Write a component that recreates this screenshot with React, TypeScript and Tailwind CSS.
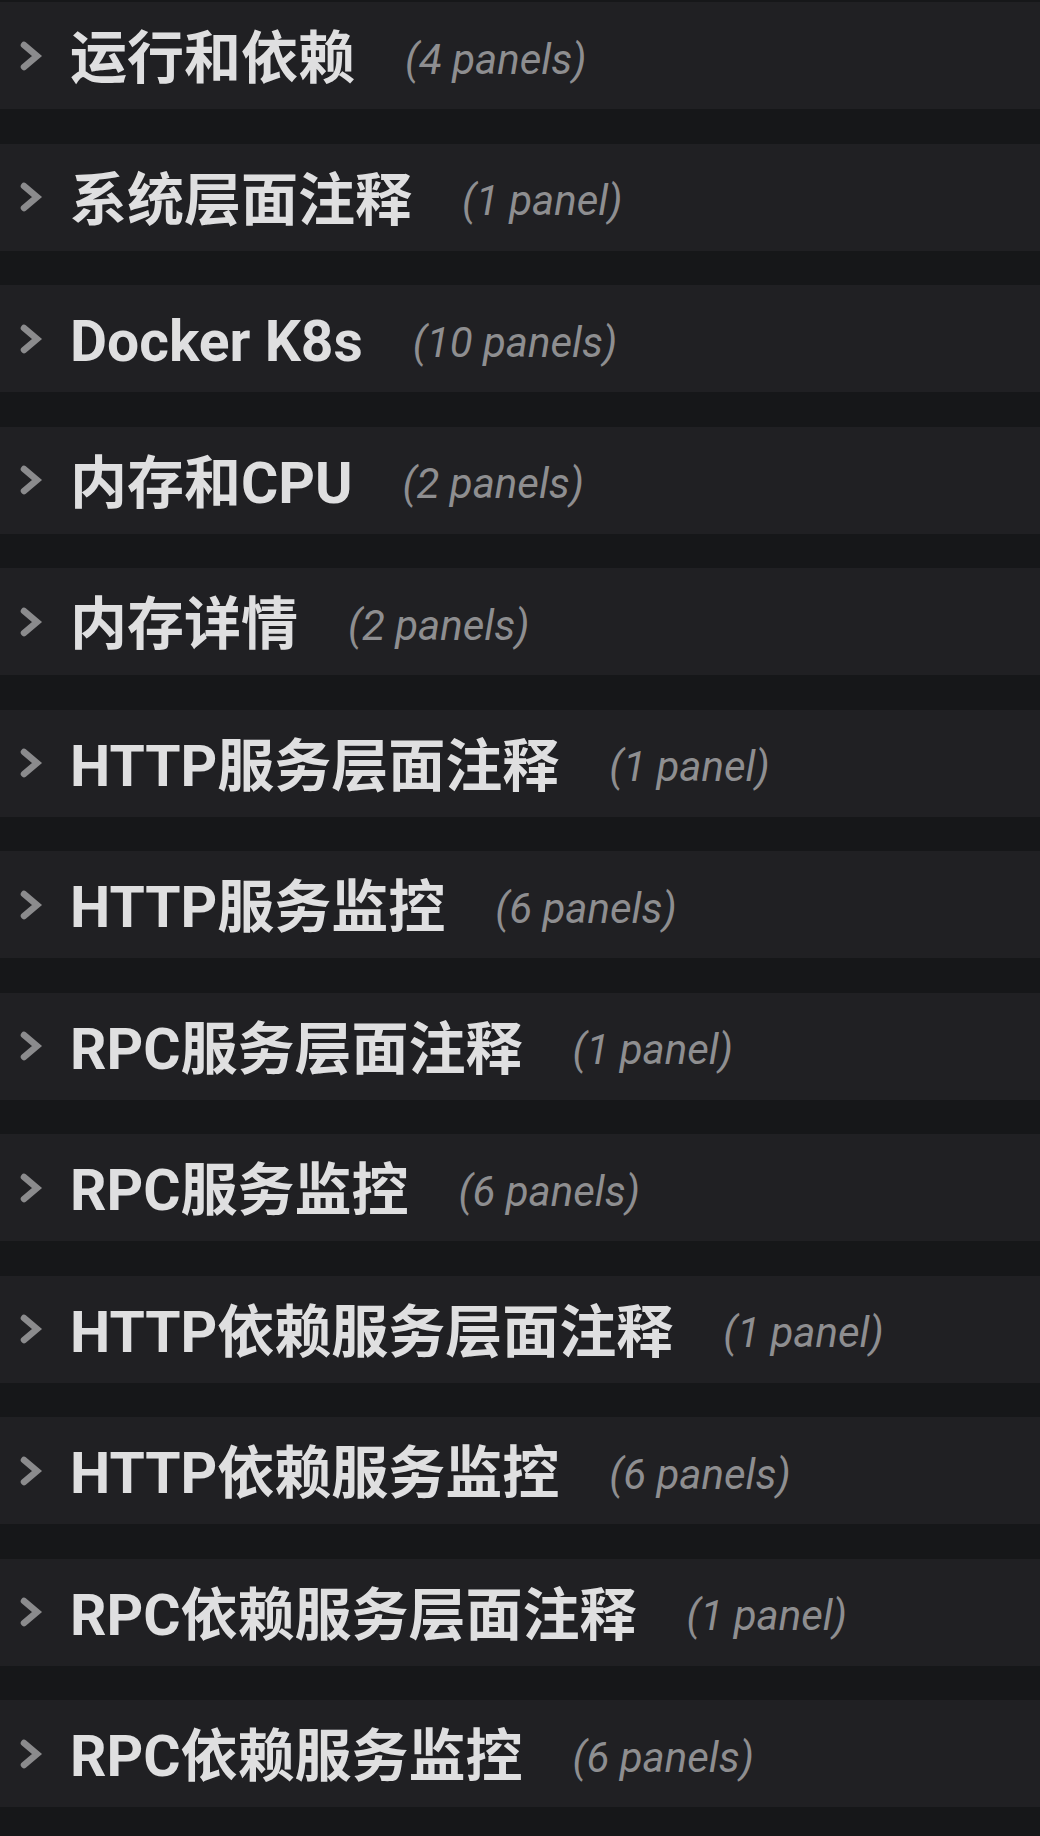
const rows: { title: string; count: string }[] = [
  { title: "运行和依赖", count: "(4 panels)" },
  { title: "系统层面注释", count: "(1 panel)" },
  { title: "Docker K8s", count: "(10 panels)" },
  { title: "内存和CPU", count: "(2 panels)" },
  { title: "内存详情", count: "(2 panels)" },
  { title: "HTTP服务层面注释", count: "(1 panel)" },
  { title: "HTTP服务监控", count: "(6 panels)" },
  { title: "RPC服务层面注释", count: "(1 panel)" },
  { title: "RPC服务监控", count: "(6 panels)" },
  { title: "HTTP依赖服务层面注释", count: "(1 panel)" },
  { title: "HTTP依赖服务监控", count: "(6 panels)" },
  { title: "RPC依赖服务层面注释", count: "(1 panel)" },
  { title: "RPC依赖服务监控", count: "(6 panels)" },
];

function Chevron() {
  return (
    <svg width="24" height="34" viewBox="0 0 24 34" className="shrink-0">
      <polyline
        points="5,6 18,17 5,28"
        fill="none"
        stroke="#8b8b8d"
        strokeWidth="6.5"
        strokeLinecap="round"
        strokeLinejoin="miter"
      />
    </svg>
  );
}

function DashboardRow({ title, count }: { title: string; count: string }) {
  return (
    <div className="flex h-[107px] items-center bg-[#202023] pl-[19px]">
      <Chevron />
      <span className="ml-[27px] pt-[6px] text-[57px] font-bold leading-none text-[#dfdfe0]">{title}</span>
      <span className="ml-[50px] pt-[8px] text-[42px] italic leading-none text-[#8e8e90]">{count}</span>
    </div>
  );
}

export default function App() {
  return (
    <div
      className="flex h-[1836px] w-full flex-col gap-[34.5px] overflow-hidden bg-[#161719] pt-[2px]"
      style={{ fontFamily: 'Roboto, "Noto Sans CJK SC", sans-serif' }}
    >
      {rows.map((r) => (
        <DashboardRow key={r.title} title={r.title} count={r.count} />
      ))}
    </div>
  );
}
